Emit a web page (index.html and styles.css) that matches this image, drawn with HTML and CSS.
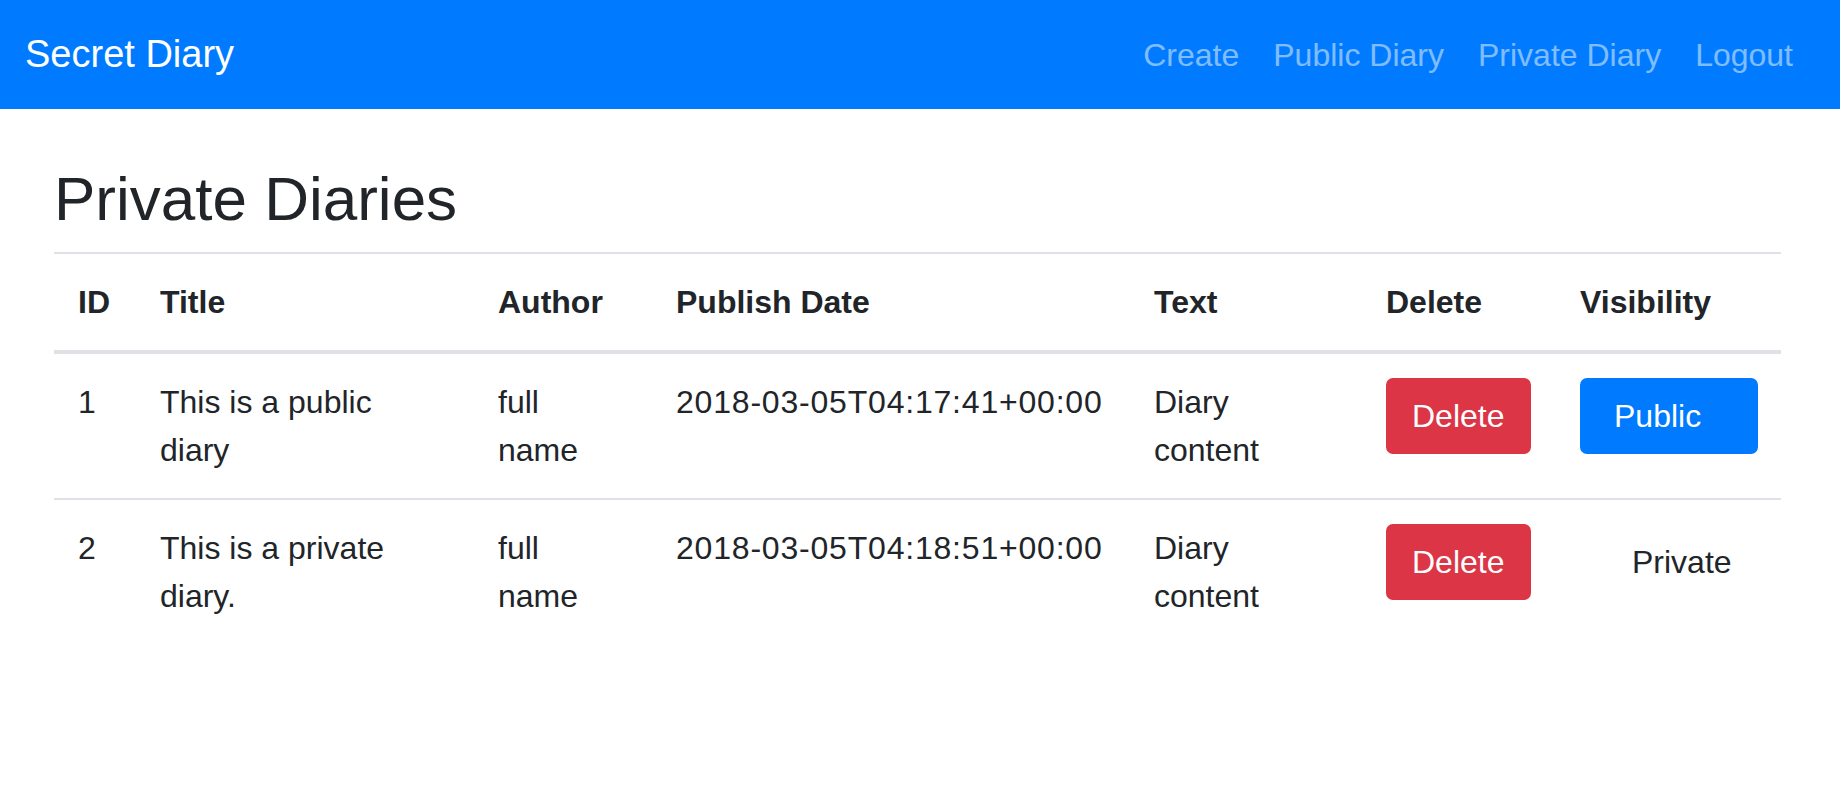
FILE: index.html
```html
<!DOCTYPE html>
<html lang="en">
<head>
<meta charset="utf-8">
<title>Secret Diary</title>
<link rel="stylesheet" href="styles.css">
</head>
<body>
<nav class="navbar">
  <a class="brand" href="#">Secret Diary</a>
  <ul class="nav-links">
    <li><a href="#">Create</a></li>
    <li><a href="#">Public Diary</a></li>
    <li><a href="#">Private Diary</a></li>
    <li><a href="#">Logout</a></li>
  </ul>
</nav>
<main class="main">
  <h1 class="page-title">Private Diaries</h1>
  <table class="diary-table">
    <thead>
      <tr>
        <th class="c-id">ID</th>
        <th class="c-title">Title</th>
        <th class="c-author">Author</th>
        <th class="c-date">Publish Date</th>
        <th class="c-text">Text</th>
        <th class="c-delete">Delete</th>
        <th class="c-vis">Visibility</th>
      </tr>
    </thead>
    <tbody>
      <tr>
        <td>1</td>
        <td class="title-cell">This is a public diary</td>
        <td class="author-cell">full name</td>
        <td class="date-cell">2018-03-05T04:17:41+00:00</td>
        <td>Diary content</td>
        <td><button class="btn btn-danger">Delete</button></td>
        <td><button class="btn btn-primary btn-public">Public</button></td>
      </tr>
      <tr>
        <td>2</td>
        <td class="title-cell">This is a private diary.</td>
        <td class="author-cell">full name</td>
        <td class="date-cell">2018-03-05T04:18:51+00:00</td>
        <td>Diary content</td>
        <td><button class="btn btn-danger">Delete</button></td>
        <td><span class="btn btn-plain">Private</span></td>
      </tr>
    </tbody>
  </table>
</main>
</body>
</html>
```

FILE: styles.css
```css
* { box-sizing: border-box; }

html, body {
  margin: 0;
  padding: 0;
  background: #ffffff;
}

body {
  font-family: "Liberation Sans", Arial, sans-serif;
  font-size: 32px;
  line-height: 48px;
  color: #212529;
}

.navbar {
  height: 109px;
  background: #007bff;
  display: flex;
  align-items: center;
  justify-content: space-between;
  padding: 0 30px 0 25px;
}

.brand {
  color: #ffffff;
  text-decoration: none;
  font-size: 38px;
  line-height: 57px;
}

.nav-links {
  list-style: none;
  margin: 0;
  padding: 0;
  display: flex;
}

.nav-links a {
  display: block;
  padding: 0 17px;
  color: rgba(255, 255, 255, 0.5);
  text-decoration: none;
  font-size: 32px;
  line-height: 48px;
}

.main {
  padding: 53px 59px 0 54px;
}

.page-title {
  margin: 0 0 16px 0;
  font-size: 62px;
  line-height: 74px;
  font-weight: 500;
  color: #212529;
}

.diary-table {
  width: 1727px;
  table-layout: fixed;
  border-collapse: collapse;
  border-top: 2px solid #dee2e6;
}

.diary-table th,
.diary-table td {
  padding: 24px;
  text-align: left;
  vertical-align: top;
}

.diary-table th {
  font-weight: 700;
  vertical-align: bottom;
  border-bottom: 4px solid #dee2e6;
}

.diary-table tbody tr + tr td {
  border-top: 2px solid #dee2e6;
}

.c-id { width: 82px; }
.c-title { width: 338px; }
.c-author { width: 178px; }
.c-date { width: 478px; }
.c-text { width: 232px; }
.c-delete { width: 194px; }
.c-vis { width: 225px; }

.diary-table .title-cell { padding-right: 60px; }
.diary-table .author-cell { padding-right: 30px; }
.diary-table .date-cell { letter-spacing: 0.8px; }

.btn {
  display: inline-block;
  font-family: inherit;
  font-size: 32px;
  line-height: 48px;
  padding: 12px 24px;
  border: 2px solid transparent;
  border-radius: 7px;
  color: #ffffff;
  cursor: pointer;
  margin: 0;
}

.btn-danger {
  background: #dc3545;
  border-color: #dc3545;
}

.btn-primary {
  background: #007bff;
  border-color: #007bff;
}

.btn-public {
  width: 178px;
  text-align: left;
  padding-left: 32px;
  padding-right: 0;
}

.btn-plain {
  background: transparent;
  color: #212529;
  padding-left: 50px;
  cursor: default;
}
```
